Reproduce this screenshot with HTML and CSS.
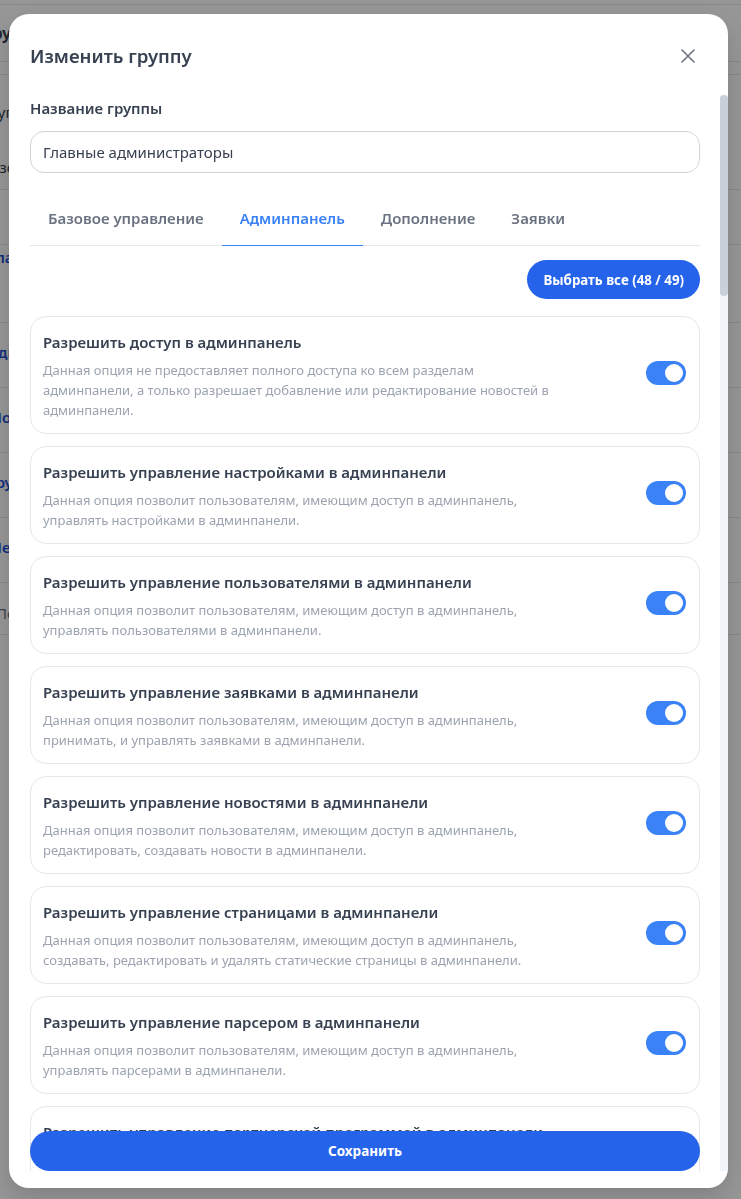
FILE: index.html
```html
<!DOCTYPE html>
<html lang="ru">
<head>
    <meta charset="utf-8">
    <title>Изменить группу</title>
    <link rel="stylesheet" href="styles.css">
</head>
<body>

    <!-- page behind the dialog -->
    <div class="page">
        <div class="bg-row h5"></div>
        <div class="bg-row h57"><span class="bg-title">Друг группы</span></div>
        <div class="bg-row h13"></div>
        <div class="bg-row h115">
            <span class="bg-line">Группы и права</span>
            <span class="bg-line second">Базовые права</span>
        </div>
        <div class="bg-row h55"></div>
        <div class="bg-row h78"><a class="bg-link">Главные администраторы</a></div>
        <div class="bg-row h65"><a class="bg-link">Администраторы</a></div>
        <div class="bg-row h65"><a class="bg-link">Модераторы</a></div>
        <div class="bg-row h65"><a class="bg-link">Группа поддержки</a></div>
        <div class="bg-row h65"><a class="bg-link">Менеджеры</a></div>
        <div class="bg-row h52"><span class="bg-muted">Пользователи</span></div>
    </div>

    <div class="overlay">
        <div class="modal">
            <div class="modal-head">
                <h2 class="modal-title">Изменить группу</h2>
                <button class="close-btn" type="button" aria-label="Закрыть">
                    <svg width="14" height="14" viewBox="0 0 14 14" fill="none">
                        <path d="M1 1L13 13M13 1L1 13" stroke="currentColor" stroke-width="1.6" stroke-linecap="round"/>
                    </svg>
                </button>
            </div>

            <div class="modal-main">
            <div class="modal-body">
                <label class="field-label" for="groupName">Название группы</label>
                <input class="field-input" id="groupName" type="text" value="Главные администраторы">

                <div class="tabs">
                    <div class="tab">Базовое управление</div>
                    <div class="tab active">Админпанель</div>
                    <div class="tab">Дополнение</div>
                    <div class="tab">Заявки</div>
                </div>

                <div class="select-row">
                    <button class="btn-select" type="button">Выбрать все (48 / 49)</button>
                </div>

                <div class="perm-list">
                    <div class="perm">
                        <div class="perm-text">
                            <div class="perm-title">Разрешить доступ в админпанель</div>
                            <div class="perm-desc">Данная опция не предоставляет полного доступа ко всем разделам админпанели, а только разрешает добавление или редактирование новостей в админпанели.</div>
                        </div>
                        <label class="switch"><input type="checkbox" checked><span></span></label>
                    </div>
                    <div class="perm">
                        <div class="perm-text">
                            <div class="perm-title">Разрешить управление настройками в админпанели</div>
                            <div class="perm-desc">Данная опция позволит пользователям, имеющим доступ в админпанель, управлять настройками в админпанели.</div>
                        </div>
                        <label class="switch"><input type="checkbox" checked><span></span></label>
                    </div>
                    <div class="perm">
                        <div class="perm-text">
                            <div class="perm-title">Разрешить управление пользователями в админпанели</div>
                            <div class="perm-desc">Данная опция позволит пользователям, имеющим доступ в админпанель, управлять пользователями в админпанели.</div>
                        </div>
                        <label class="switch"><input type="checkbox" checked><span></span></label>
                    </div>
                    <div class="perm">
                        <div class="perm-text">
                            <div class="perm-title">Разрешить управление заявками в админпанели</div>
                            <div class="perm-desc">Данная опция позволит пользователям, имеющим доступ в админпанель, принимать, и управлять заявками в админпанели.</div>
                        </div>
                        <label class="switch"><input type="checkbox" checked><span></span></label>
                    </div>
                    <div class="perm">
                        <div class="perm-text">
                            <div class="perm-title">Разрешить управление новостями в админпанели</div>
                            <div class="perm-desc">Данная опция позволит пользователям, имеющим доступ в админпанель, редактировать, создавать новости в админпанели.</div>
                        </div>
                        <label class="switch"><input type="checkbox" checked><span></span></label>
                    </div>
                    <div class="perm">
                        <div class="perm-text">
                            <div class="perm-title">Разрешить управление страницами в админпанели</div>
                            <div class="perm-desc">Данная опция позволит пользователям, имеющим доступ в админпанель, создавать, редактировать и удалять статические страницы в админпанели.</div>
                        </div>
                        <label class="switch"><input type="checkbox" checked><span></span></label>
                    </div>
                    <div class="perm">
                        <div class="perm-text">
                            <div class="perm-title">Разрешить управление парсером в админпанели</div>
                            <div class="perm-desc">Данная опция позволит пользователям, имеющим доступ в админпанель, управлять парсерами в админпанели.</div>
                        </div>
                        <label class="switch"><input type="checkbox" checked><span></span></label>
                    </div>
                    <div class="perm">
                        <div class="perm-text">
                            <div class="perm-title">Разрешить управление партнерской программой в админпанели</div>
                            <div class="perm-desc">Данная опция позволит пользователям, имеющим доступ в админпанель, управлять партнерской программой в админпанели.</div>
                        </div>
                        <label class="switch"><input type="checkbox" checked><span></span></label>
                    </div>
                    <div class="perm">
                        <div class="perm-text">
                            <div class="perm-title">Разрешить управление группами в админпанели</div>
                            <div class="perm-desc">Данная опция позволит пользователям, имеющим доступ в админпанель, создавать и редактировать группы в админпанели.</div>
                        </div>
                        <label class="switch"><input type="checkbox" checked><span></span></label>
                    </div>
                    <div class="perm">
                        <div class="perm-text">
                            <div class="perm-title">Разрешить управление категориями в админпанели</div>
                            <div class="perm-desc">Данная опция позволит пользователям, имеющим доступ в админпанель, управлять категориями в админпанели.</div>
                        </div>
                        <label class="switch"><input type="checkbox" checked><span></span></label>
                    </div>
                    <div class="perm">
                        <div class="perm-text">
                            <div class="perm-title">Разрешить управление товарами в админпанели</div>
                            <div class="perm-desc">Данная опция позволит пользователям, имеющим доступ в админпанель, управлять товарами в админпанели.</div>
                        </div>
                        <label class="switch"><input type="checkbox" checked><span></span></label>
                    </div>
                    <div class="perm">
                        <div class="perm-text">
                            <div class="perm-title">Разрешить управление заказами в админпанели</div>
                            <div class="perm-desc">Данная опция позволит пользователям, имеющим доступ в админпанель, просматривать и управлять заказами в админпанели.</div>
                        </div>
                        <label class="switch"><input type="checkbox" checked><span></span></label>
                    </div>
                    <div class="perm">
                        <div class="perm-text">
                            <div class="perm-title">Разрешить управление платежами в админпанели</div>
                            <div class="perm-desc">Данная опция позволит пользователям, имеющим доступ в админпанель, управлять платежами в админпанели.</div>
                        </div>
                        <label class="switch"><input type="checkbox" checked><span></span></label>
                    </div>
                    <div class="perm">
                        <div class="perm-text">
                            <div class="perm-title">Разрешить управление промокодами в админпанели</div>
                            <div class="perm-desc">Данная опция позволит пользователям, имеющим доступ в админпанель, создавать и удалять промокоды в админпанели.</div>
                        </div>
                        <label class="switch"><input type="checkbox" checked><span></span></label>
                    </div>
                    <div class="perm">
                        <div class="perm-text">
                            <div class="perm-title">Разрешить управление отзывами в админпанели</div>
                            <div class="perm-desc">Данная опция позволит пользователям, имеющим доступ в админпанель, управлять отзывами в админпанели.</div>
                        </div>
                        <label class="switch"><input type="checkbox" checked><span></span></label>
                    </div>
                    <div class="perm">
                        <div class="perm-text">
                            <div class="perm-title">Разрешить управление тикетами в админпанели</div>
                            <div class="perm-desc">Данная опция позволит пользователям, имеющим доступ в админпанель, отвечать на тикеты в админпанели.</div>
                        </div>
                        <label class="switch"><input type="checkbox" checked><span></span></label>
                    </div>
                    <div class="perm">
                        <div class="perm-text">
                            <div class="perm-title">Разрешить управление меню в админпанели</div>
                            <div class="perm-desc">Данная опция позволит пользователям, имеющим доступ в админпанель, управлять меню сайта в админпанели.</div>
                        </div>
                        <label class="switch"><input type="checkbox" checked><span></span></label>
                    </div>
                    <div class="perm">
                        <div class="perm-text">
                            <div class="perm-title">Разрешить управление баннерами в админпанели</div>
                            <div class="perm-desc">Данная опция позволит пользователям, имеющим доступ в админпанель, управлять баннерами в админпанели.</div>
                        </div>
                        <label class="switch"><input type="checkbox" checked><span></span></label>
                    </div>
                    <div class="perm">
                        <div class="perm-text">
                            <div class="perm-title">Разрешить управление шаблонами в админпанели</div>
                            <div class="perm-desc">Данная опция позволит пользователям, имеющим доступ в админпанель, редактировать шаблоны в админпанели.</div>
                        </div>
                        <label class="switch"><input type="checkbox" checked><span></span></label>
                    </div>
                    <div class="perm">
                        <div class="perm-text">
                            <div class="perm-title">Разрешить управление языками в админпанели</div>
                            <div class="perm-desc">Данная опция позволит пользователям, имеющим доступ в админпанель, управлять языками и переводами в админпанели.</div>
                        </div>
                        <label class="switch"><input type="checkbox" checked><span></span></label>
                    </div>
                    <div class="perm">
                        <div class="perm-text">
                            <div class="perm-title">Разрешить просмотр логов в админпанели</div>
                            <div class="perm-desc">Данная опция позволит пользователям, имеющим доступ в админпанель, просматривать журнал действий в админпанели.</div>
                        </div>
                        <label class="switch"><input type="checkbox" checked><span></span></label>
                    </div>
                    <div class="perm">
                        <div class="perm-text">
                            <div class="perm-title">Разрешить управление резервными копиями</div>
                            <div class="perm-desc">Данная опция позволит пользователям, имеющим доступ в админпанель, создавать и восстанавливать резервные копии.</div>
                        </div>
                        <label class="switch"><input type="checkbox" checked><span></span></label>
                    </div>
                    <div class="perm">
                        <div class="perm-text">
                            <div class="perm-title">Разрешить управление файлами в админпанели</div>
                            <div class="perm-desc">Данная опция позволит пользователям, имеющим доступ в админпанель, загружать и удалять файлы в админпанели.</div>
                        </div>
                        <label class="switch"><input type="checkbox" checked><span></span></label>
                    </div>
                    <div class="perm">
                        <div class="perm-text">
                            <div class="perm-title">Разрешить управление SEO в админпанели</div>
                            <div class="perm-desc">Данная опция позволит пользователям, имеющим доступ в админпанель, редактировать мета-теги в админпанели.</div>
                        </div>
                        <label class="switch"><input type="checkbox" checked><span></span></label>
                    </div>
                    <div class="perm">
                        <div class="perm-text">
                            <div class="perm-title">Разрешить управление рассылками в админпанели</div>
                            <div class="perm-desc">Данная опция позволит пользователям, имеющим доступ в админпанель, отправлять рассылки в админпанели.</div>
                        </div>
                        <label class="switch"><input type="checkbox" checked><span></span></label>
                    </div>
                    <div class="perm">
                        <div class="perm-text">
                            <div class="perm-title">Разрешить управление уведомлениями в админпанели</div>
                            <div class="perm-desc">Данная опция позволит пользователям, имеющим доступ в админпанель, управлять уведомлениями в админпанели.</div>
                        </div>
                        <label class="switch"><input type="checkbox" checked><span></span></label>
                    </div>
                    <div class="perm">
                        <div class="perm-text">
                            <div class="perm-title">Разрешить управление комментариями в админпанели</div>
                            <div class="perm-desc">Данная опция позволит пользователям, имеющим доступ в админпанель, модерировать комментарии в админпанели.</div>
                        </div>
                        <label class="switch"><input type="checkbox" checked><span></span></label>
                    </div>
                    <div class="perm">
                        <div class="perm-text">
                            <div class="perm-title">Разрешить управление тегами в админпанели</div>
                            <div class="perm-desc">Данная опция позволит пользователям, имеющим доступ в админпанель, управлять тегами в админпанели.</div>
                        </div>
                        <label class="switch"><input type="checkbox" checked><span></span></label>
                    </div>
                    <div class="perm">
                        <div class="perm-text">
                            <div class="perm-title">Разрешить управление формами в админпанели</div>
                            <div class="perm-desc">Данная опция позволит пользователям, имеющим доступ в админпанель, создавать формы обратной связи в админпанели.</div>
                        </div>
                        <label class="switch"><input type="checkbox" checked><span></span></label>
                    </div>
                    <div class="perm">
                        <div class="perm-text">
                            <div class="perm-title">Разрешить управление виджетами в админпанели</div>
                            <div class="perm-desc">Данная опция позволит пользователям, имеющим доступ в админпанель, управлять виджетами в админпанели.</div>
                        </div>
                        <label class="switch"><input type="checkbox" checked><span></span></label>
                    </div>
                    <div class="perm">
                        <div class="perm-text">
                            <div class="perm-title">Разрешить управление модулями в админпанели</div>
                            <div class="perm-desc">Данная опция позволит пользователям, имеющим доступ в админпанель, включать и отключать модули в админпанели.</div>
                        </div>
                        <label class="switch"><input type="checkbox" checked><span></span></label>
                    </div>
                    <div class="perm">
                        <div class="perm-text">
                            <div class="perm-title">Разрешить управление API-ключами в админпанели</div>
                            <div class="perm-desc">Данная опция позволит пользователям, имеющим доступ в админпанель, создавать API-ключи в админпанели.</div>
                        </div>
                        <label class="switch"><input type="checkbox"><span></span></label>
                    </div>
                    <div class="perm">
                        <div class="perm-text">
                            <div class="perm-title">Разрешить управление вебхуками в админпанели</div>
                            <div class="perm-desc">Данная опция позволит пользователям, имеющим доступ в админпанель, настраивать вебхуки в админпанели.</div>
                        </div>
                        <label class="switch"><input type="checkbox" checked><span></span></label>
                    </div>
                    <div class="perm">
                        <div class="perm-text">
                            <div class="perm-title">Разрешить просмотр статистики в админпанели</div>
                            <div class="perm-desc">Данная опция позволит пользователям, имеющим доступ в админпанель, просматривать статистику в админпанели.</div>
                        </div>
                        <label class="switch"><input type="checkbox" checked><span></span></label>
                    </div>
                    <div class="perm">
                        <div class="perm-text">
                            <div class="perm-title">Разрешить просмотр отчетов в админпанели</div>
                            <div class="perm-desc">Данная опция позволит пользователям, имеющим доступ в админпанель, формировать отчеты в админпанели.</div>
                        </div>
                        <label class="switch"><input type="checkbox" checked><span></span></label>
                    </div>
                    <div class="perm">
                        <div class="perm-text">
                            <div class="perm-title">Разрешить управление задачами в админпанели</div>
                            <div class="perm-desc">Данная опция позволит пользователям, имеющим доступ в админпанель, управлять задачами по расписанию.</div>
                        </div>
                        <label class="switch"><input type="checkbox" checked><span></span></label>
                    </div>
                    <div class="perm">
                        <div class="perm-text">
                            <div class="perm-title">Разрешить очистку кэша в админпанели</div>
                            <div class="perm-desc">Данная опция позволит пользователям, имеющим доступ в админпанель, очищать кэш сайта в админпанели.</div>
                        </div>
                        <label class="switch"><input type="checkbox" checked><span></span></label>
                    </div>
                    <div class="perm">
                        <div class="perm-text">
                            <div class="perm-title">Разрешить управление доменами в админпанели</div>
                            <div class="perm-desc">Данная опция позволит пользователям, имеющим доступ в админпанель, управлять доменами в админпанели.</div>
                        </div>
                        <label class="switch"><input type="checkbox" checked><span></span></label>
                    </div>
                    <div class="perm">
                        <div class="perm-text">
                            <div class="perm-title">Разрешить управление почтой в админпанели</div>
                            <div class="perm-desc">Данная опция позволит пользователям, имеющим доступ в админпанель, настраивать почтовые шаблоны в админпанели.</div>
                        </div>
                        <label class="switch"><input type="checkbox" checked><span></span></label>
                    </div>
                    <div class="perm">
                        <div class="perm-text">
                            <div class="perm-title">Разрешить управление подписками в админпанели</div>
                            <div class="perm-desc">Данная опция позволит пользователям, имеющим доступ в админпанель, управлять подписками в админпанели.</div>
                        </div>
                        <label class="switch"><input type="checkbox" checked><span></span></label>
                    </div>
                    <div class="perm">
                        <div class="perm-text">
                            <div class="perm-title">Разрешить управление тарифами в админпанели</div>
                            <div class="perm-desc">Данная опция позволит пользователям, имеющим доступ в админпанель, изменять тарифы в админпанели.</div>
                        </div>
                        <label class="switch"><input type="checkbox" checked><span></span></label>
                    </div>
                    <div class="perm">
                        <div class="perm-text">
                            <div class="perm-title">Разрешить управление валютами в админпанели</div>
                            <div class="perm-desc">Данная опция позволит пользователям, имеющим доступ в админпанель, управлять валютами и курсами в админпанели.</div>
                        </div>
                        <label class="switch"><input type="checkbox" checked><span></span></label>
                    </div>
                    <div class="perm">
                        <div class="perm-text">
                            <div class="perm-title">Разрешить управление налогами в админпанели</div>
                            <div class="perm-desc">Данная опция позволит пользователям, имеющим доступ в админпанель, настраивать налоги в админпанели.</div>
                        </div>
                        <label class="switch"><input type="checkbox" checked><span></span></label>
                    </div>
                    <div class="perm">
                        <div class="perm-text">
                            <div class="perm-title">Разрешить управление доставкой в админпанели</div>
                            <div class="perm-desc">Данная опция позволит пользователям, имеющим доступ в админпанель, управлять способами доставки в админпанели.</div>
                        </div>
                        <label class="switch"><input type="checkbox" checked><span></span></label>
                    </div>
                    <div class="perm">
                        <div class="perm-text">
                            <div class="perm-title">Разрешить управление складами в админпанели</div>
                            <div class="perm-desc">Данная опция позволит пользователям, имеющим доступ в админпанель, управлять складами в админпанели.</div>
                        </div>
                        <label class="switch"><input type="checkbox" checked><span></span></label>
                    </div>
                    <div class="perm">
                        <div class="perm-text">
                            <div class="perm-title">Разрешить управление баллами в админпанели</div>
                            <div class="perm-desc">Данная опция позволит пользователям, имеющим доступ в админпанель, начислять и списывать баллы в админпанели.</div>
                        </div>
                        <label class="switch"><input type="checkbox" checked><span></span></label>
                    </div>
                    <div class="perm">
                        <div class="perm-text">
                            <div class="perm-title">Разрешить управление балансом в админпанели</div>
                            <div class="perm-desc">Данная опция позволит пользователям, имеющим доступ в админпанель, изменять баланс пользователей в админпанели.</div>
                        </div>
                        <label class="switch"><input type="checkbox" checked><span></span></label>
                    </div>
                    <div class="perm">
                        <div class="perm-text">
                            <div class="perm-title">Разрешить управление блокировками в админпанели</div>
                            <div class="perm-desc">Данная опция позволит пользователям, имеющим доступ в админпанель, блокировать пользователей в админпанели.</div>
                        </div>
                        <label class="switch"><input type="checkbox" checked><span></span></label>
                    </div>
                    <div class="perm">
                        <div class="perm-text">
                            <div class="perm-title">Разрешить управление интеграциями в админпанели</div>
                            <div class="perm-desc">Данная опция позволит пользователям, имеющим доступ в админпанель, подключать внешние сервисы в админпанели.</div>
                        </div>
                        <label class="switch"><input type="checkbox" checked><span></span></label>
                    </div>
                    <div class="perm">
                        <div class="perm-text">
                            <div class="perm-title">Разрешить управление обновлениями в админпанели</div>
                            <div class="perm-desc">Данная опция позволит пользователям, имеющим доступ в админпанель, устанавливать обновления в админпанели.</div>
                        </div>
                        <label class="switch"><input type="checkbox" checked><span></span></label>
                    </div>
                </div>

                <div class="modal-foot">
                    <button class="btn-save" type="button">Сохранить</button>
                </div>
            </div>

            <!-- scroll rail (thumb sits at the top: list not scrolled yet) -->
            <div class="rail"><div class="rail-thumb"></div></div>
            </div>
        </div>
    </div>
</body>
</html>
```

FILE: styles.css
```css
* {
    box-sizing: border-box;
}
html, body {
    margin: 0;
    height: 100%;
}
body {
    font-family: "Noto Sans", "Open Sans", sans-serif;
    color: #374151;
    background: #fff;
    overflow: hidden;
}

/* page behind the dialog */
.page {
    margin-left: -30px;
}
.bg-row {
    border-bottom: 1px solid #e5e7eb;
    font-size: 15px;
    line-height: 20px;
    white-space: nowrap;
}
.h5 { height: 5px; }
.h13 { height: 13px; }
.h52 { height: 52px; padding-top: 20px; }
.h55 { height: 55px; }
.h57 { height: 57px; padding-top: 18px; }
.h65 { height: 65px; padding-top: 19px; }
.h78 { height: 78px; padding-top: 2px; }
.h115 { height: 115px; padding-top: 27px; }
.bg-title {
    font-weight: 700;
    font-size: 16px;
    margin-left: 10px;
}
.bg-line {
    display: block;
    margin-left: 12px;
}
.bg-line.second {
    margin-top: 35px;
}
.bg-link {
    color: #1d4ed8;
    font-weight: 600;
    margin-left: 18px;
}
.bg-muted {
    color: #6b7280;
    margin-left: 26px;
}

.overlay {
    position: fixed;
    inset: 0;
    background: rgba(0, 0, 0, 0.41);
    padding: 14px 13px 11px 9px;
    display: flex;
}

/* dialog */
.modal {
    flex: 1;
    display: flex;
    flex-direction: column;
    background: #fff;
    border-radius: 20px;
    overflow: hidden;
    padding-bottom: 17px;
    box-shadow: 0 10px 25px rgba(0, 0, 0, 0.15);
}
.modal-head {
    display: flex;
    align-items: center;
    justify-content: space-between;
    padding: 28px 33px 25px 21px;
}
.modal-title {
    margin: 0;
    font-size: 18.6px;
    line-height: 28px;
    font-weight: 600;
    color: #374151;
}
.close-btn {
    border: 0;
    background: none;
    padding: 0;
    color: #6b7280;
    display: flex;
}
.modal-main {
    flex: 1;
    min-height: 0;
    display: flex;
}
.modal-body {
    flex: 1;
    min-width: 0;
    overflow: hidden;
    padding: 2px 20px 0 21px;
}
.rail {
    width: 8px;
    flex-shrink: 0;
    background: #f1f4f8;
}
.rail-thumb {
    height: 201px;
    border-radius: 4px;
    background: #c9d0d9;
}

.field-label {
    display: block;
    font-size: 15px;
    line-height: 22px;
    font-weight: 600;
    color: #374151;
}
.field-input {
    display: block;
    width: 100%;
    height: 42px;
    margin-top: 12px;
    padding: 0 12px;
    border: 1px solid #d1d5db;
    border-radius: 14px;
    font-family: inherit;
    font-size: 15px;
    color: #374151;
    outline: none;
}

.tabs {
    display: flex;
    margin-top: 18px;
    border-bottom: 1px solid #e5e7eb;
}
.tab {
    padding: 16px 18px;
    font-size: 15px;
    line-height: 22px;
    font-weight: 600;
    color: #6b7280;
    margin-bottom: -1px;
    border-bottom: 1px solid transparent;
}
.tab.active {
    color: #3b82f6;
    border-bottom-color: #3b82f6;
}

.select-row {
    display: flex;
    justify-content: flex-end;
    margin-top: 14px;
}
.btn-select {
    height: 39px;
    padding: 0 16px;
    border: 0;
    border-radius: 20px;
    background: #2563eb;
    color: #fff;
    font-family: inherit;
    font-size: 13.3px;
    font-weight: 700;
}

.perm-list {
    display: flex;
    flex-direction: column;
    gap: 12px;
    margin-top: 17px;
}
.perm {
    display: flex;
    align-items: center;
    justify-content: space-between;
    border: 1px solid #e5e7eb;
    border-radius: 16px;
    padding: 15px 12px 13px;
}
.perm-text {
    max-width: 518px;
}
.perm-title {
    font-size: 15px;
    line-height: 20px;
    font-weight: 600;
    color: #374151;
}
.perm-desc {
    margin-top: 8px;
    font-size: 13px;
    line-height: 20px;
    color: #9ca3af;
}

.switch {
    flex-shrink: 0;
    position: relative;
    width: 40px;
    height: 24px;
    margin: -6px 1px 0 0;
}
.switch input {
    display: none;
}
.switch span {
    display: block;
    width: 100%;
    height: 100%;
    border-radius: 12px;
    background: #d1d5db;
}
.switch span::after {
    content: "";
    position: absolute;
    top: 3px;
    left: 3px;
    width: 18px;
    height: 18px;
    border-radius: 50%;
    background: #fff;
}
.switch input:checked + span {
    background: #3b82f6;
}
.switch input:checked + span::after {
    left: 19px;
}

.modal-foot {
    position: sticky;
    bottom: 0;
    margin-top: 12px;
}
.btn-save {
    display: block;
    width: 100%;
    height: 40px;
    border: 0;
    border-radius: 20px;
    background: #2563eb;
    color: #fff;
    font-family: inherit;
    font-size: 13.5px;
    font-weight: 700;
}
```
